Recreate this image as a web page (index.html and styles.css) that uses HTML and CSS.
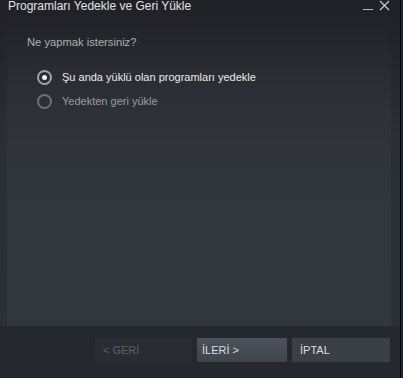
FILE: index.html
```html
<!DOCTYPE html>
<html lang="tr">

<head>
    <meta charset="UTF-8">
    <title>Programları Yedekle ve Geri Yükle</title>
    <link rel="stylesheet" href="styles.css">
</head>

<body>
    <div class="screen">
        <div class="window">
            <div class="titlebar">
                <span class="title">Programları Yedekle ve Geri Yükle</span>
                <div class="controls">
                    <span class="minimize"></span>
                    <svg class="close" width="11" height="11" viewBox="0 0 11 11">
                        <path d="M1 1 L10 10 M10 1 L1 10" stroke="#c6c8cb" stroke-width="1.3" fill="none" />
                    </svg>
                </div>
            </div>

            <div class="body">
                <div class="panel">
                    <div class="question">Ne yapmak istersiniz?</div>
                    <div class="options">
                        <label class="option checked">
                            <span class="radio"><span class="dot"></span></span>
                            Şu anda yüklü olan programları yedekle
                        </label>
                        <label class="option">
                            <span class="radio"></span>
                            Yedekten geri yükle
                        </label>
                    </div>
                </div>
            </div>

            <div class="footer">
                <button class="btn disabled">&lt; GERİ</button>
                <button class="btn primary">İLERİ &gt;</button>
                <button class="btn cancel">İPTAL</button>
            </div>
        </div>
        <div class="edge"></div>
    </div>
</body>

</html>
```

FILE: styles.css
```css
body {
    margin: 0;
    background-color: #1f232b;
    font-family: Arial, "Liberation Sans", sans-serif;
    overflow: hidden;
}

.screen {
    display: flex;
    height: 378px;
}

.window {
    width: 400px;
    display: flex;
    flex-direction: column;
    background: linear-gradient(to bottom, #1f2126 0px, #23262b 60px, #2b2e34 140px, #2d3036 378px);
    border-right: 1px solid #0b0c0e;
}

.edge {
    flex: 1;
    background-color: #1d222c;
}

.titlebar {
    height: 20px;
    display: flex;
    justify-content: space-between;
    align-items: flex-start;
    padding: 0 10px 0 8px;
}

.title {
    color: #e2e4e5;
    font-size: 12px;
    line-height: 13px;
}

.controls {
    display: flex;
    align-items: flex-start;
    gap: 6px;
}

.minimize {
    width: 10px;
    height: 1px;
    margin-top: 9px;
    background-color: #b8babd;
}

.body {
    flex: 1;
    padding: 0 9px 0 7px;
    display: flex;
}

.panel {
    flex: 1;
    padding: 16px 20px 0;
    background: linear-gradient(to bottom, rgba(50, 54, 61, 0) 0px, rgba(50, 54, 61, 0.5) 80px, #32363d 200px);
}

.question {
    color: #adb0b4;
    font-size: 11.2px;
    line-height: 13px;
}

.options {
    margin-top: 21px;
    display: flex;
    flex-direction: column;
    gap: 9px;
}

.option {
    display: flex;
    align-items: center;
    gap: 10px;
    font-size: 11px;
    line-height: 15px;
    color: #989ca1;
    margin-left: 10px;
}

.option.checked {
    color: #eaebec;
}

.radio {
    width: 11px;
    height: 11px;
    border: 2px solid #6e7176;
    border-radius: 50%;
    display: flex;
    align-items: center;
    justify-content: center;
}

.option.checked .radio {
    border-color: #a0a2a6;
}

.dot {
    width: 5px;
    height: 5px;
    border-radius: 50%;
    background-color: #f4f4f4;
}

.footer {
    height: 40px;
    display: flex;
    align-items: flex-start;
    justify-content: flex-end;
    gap: 5px;
    padding: 12px 10px 0 0;
    background-color: #25282e;
}

.btn {
    height: 24px;
    border: none;
    text-align: left;
    font-family: Arial, "Liberation Sans", sans-serif;
    font-size: 11px;
    color: #dcdee0;
}

.btn.cancel {
    width: 98px;
    padding: 0 0 0 8px;
    background-color: #3b3f46;
}

.btn.primary {
    width: 90px;
    padding: 0 0 0 5px;
    background: linear-gradient(to bottom, #4c525a, #40454d);
}

.btn.disabled {
    width: 97px;
    padding: 0 0 0 8px;
    color: #5d6065;
    background-color: #292c32;
}
```
